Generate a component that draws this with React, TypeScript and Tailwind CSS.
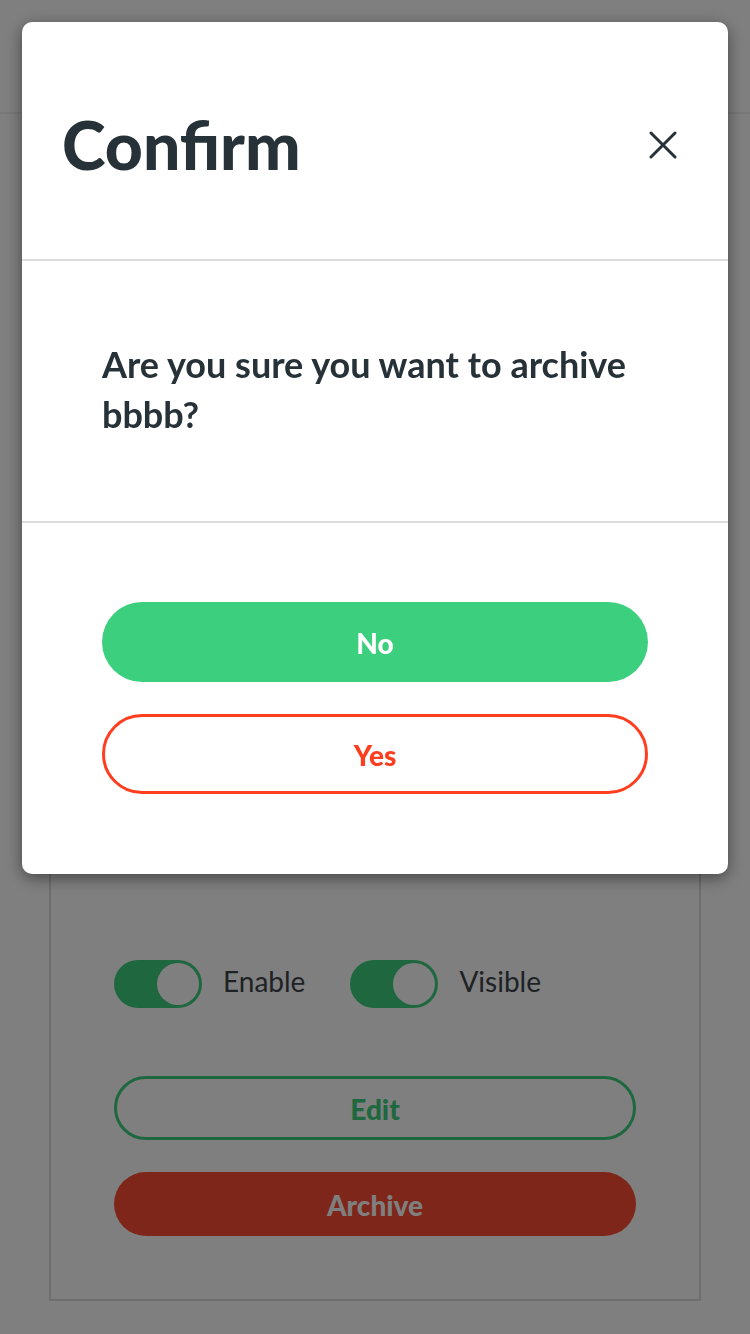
import React from "react";

function Toggle({ label }: { label: string }) {
    return (
        <div className="flex items-center">
            <div className="w-[88px] h-[48px] rounded-full bg-[#3ccf7e] p-[3px] flex justify-end">
                <div className="w-[42px] h-[42px] rounded-full bg-white" />
            </div>
            <span className="ml-[21px] pb-[6px] text-[28px] text-[#3d454b]">{label}</span>
        </div>
    );
}

function CloseIcon() {
    return (
        <svg width="28" height="28" viewBox="0 0 28 28" fill="none">
            <path d="M2 2L26 26M26 2L2 26" stroke="#263238" strokeWidth="3" strokeLinecap="round" />
        </svg>
    );
}

export default function App() {
    return (
        <div className="relative min-h-screen bg-white font-['Lato',_sans-serif]">
            {/* page behind the dialog */}
            <div className="h-[114px] border-b-2 border-[#eeeeee]" />
            <div className="mx-[49px] mt-[36px] border-2 border-[#dcdcdc] px-[63px] pt-[808px] pb-[63px]">
                <div className="flex items-center gap-[45px]">
                    <Toggle label="Enable" />
                    <Toggle label="Visible" />
                </div>
                <button className="mt-[68px] w-full h-[64px] pt-[2px] rounded-full border-[3px] border-[#3ccf7e] text-[#3ccf7e] text-[28px] font-black">
                    Edit
                </button>
                <button className="mt-[32px] w-full h-[64px] pt-[2px] rounded-full bg-[#fc4c32] text-white text-[28px] font-black">
                    Archive
                </button>
            </div>

            {/* overlay */}
            <div className="fixed inset-0 bg-black/50">
                <div className="absolute top-[22px] left-[22px] right-[22px] bg-white rounded-[10px] shadow-[0_4px_16px_rgba(0,0,0,0.45)]">
                    <div className="h-[239px] flex items-center justify-between pt-[8px] pl-[40px] pr-[51px] border-b-2 border-[#dcdcdc]">
                        <h1 className="text-[66px] font-black text-[#263238] leading-none">Confirm</h1>
                        <CloseIcon />
                    </div>
                    <div className="h-[262px] flex items-center px-[80px] pb-[4px] border-b-2 border-[#dcdcdc]">
                        <p className="text-[36px] leading-[50px] font-bold text-[#263238]">
                            Are you sure you want to archive bbbb?
                        </p>
                    </div>
                    <div className="flex flex-col gap-[32px] px-[80px] pt-[79px] pb-[80px]">
                        <button className="h-[80px] pt-[2px] rounded-full bg-[#3ccf7e] text-white text-[28px] font-black">
                            No
                        </button>
                        <button className="h-[80px] pt-[2px] rounded-full border-[3px] border-[#ff3d1f] text-[#ff3d1f] text-[28px] font-black">
                            Yes
                        </button>
                    </div>
                </div>
            </div>
        </div>
    );
}
